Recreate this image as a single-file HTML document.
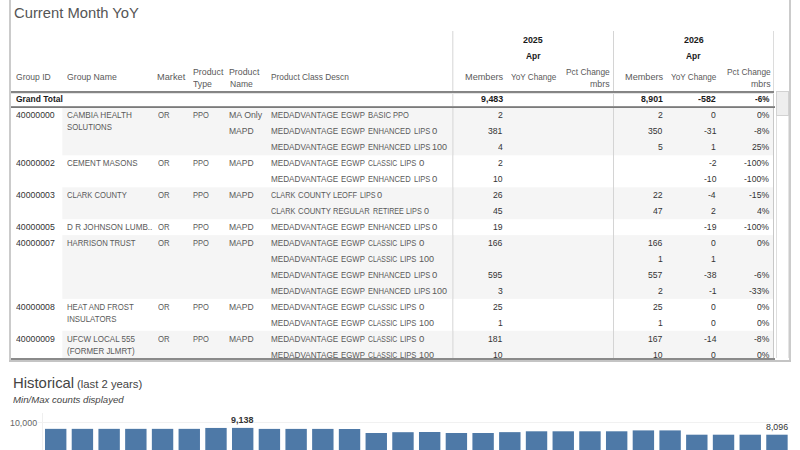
<!DOCTYPE html>
<html><head><meta charset="utf-8"><title>Current Month YoY</title>
<style>
html,body{margin:0;padding:0;}
body{width:800px;height:450px;overflow:hidden;background:#fff;position:relative;font-family:"Liberation Sans",sans-serif;color:#333;}
.t{position:absolute;display:block;white-space:nowrap;transform-origin:0 0;}
.box{position:absolute;}
#clip{position:absolute;left:0;top:0;width:800px;height:358px;overflow:hidden;}
</style></head><body>

<svg class="box" style="left:0;top:100px" width="800" height="260" viewBox="0 100 800 260">
<rect x="62.3" y="107" width="711.2" height="48.30" fill="#f5f5f5"/>
<rect x="62.3" y="187.3" width="711.2" height="31.90" fill="#f5f5f5"/>
<rect x="62.3" y="235.1" width="711.2" height="63.80" fill="#f5f5f5"/>
<rect x="62.3" y="330.8" width="711.2" height="27.20" fill="#f5f5f5"/>
</svg>
<div class="box" style="left:9px;top:0;width:2px;height:362px;background:#cbcbcb"></div>
<div class="box" style="left:789px;top:0;width:2px;height:362px;background:#cbcbcb"></div>
<div class="box" style="left:9px;top:360px;width:782px;height:2px;background:#c4c4c4"></div>
<div class="box" style="left:452px;top:31px;width:1px;height:327px;background:#e2e2e2"></div>
<div class="box" style="left:453px;top:31px;width:1px;height:327px;background:rgba(0,0,0,0.05)"></div>
<div class="box" style="left:613px;top:31px;width:1px;height:327px;background:#d4d4d4"></div>
<div class="box" style="left:773px;top:31px;width:1px;height:60px;background:#dcdcdc"></div>
<div class="box" style="left:773px;top:91px;width:1px;height:267px;background:#c8c8c8"></div>
<div class="box" style="left:11px;top:91px;width:763px;height:1px;background:#848484"></div>
<div class="box" style="left:11px;top:92px;width:763px;height:1px;background:#868686"></div>
<div class="box" style="left:11px;top:93px;width:763px;height:1px;background:#e4e4e4"></div>
<div class="box" style="left:11px;top:106px;width:764px;height:1px;background:#929292"></div>
<div class="box" style="left:11px;top:107px;width:764px;height:1px;background:#7a7a7a"></div>
<div class="box" style="left:11px;top:358px;width:764px;height:2px;background:#8a8a8a"></div>
<div class="box" style="left:776px;top:91px;width:1px;height:267px;background:#dedede"></div>
<div class="box" style="left:788px;top:91px;width:1px;height:267px;background:#e4e4e4"></div>
<div class="box" style="left:776px;top:91px;width:13px;height:25px;background:#eeeeee;box-sizing:border-box;border:1px solid #d2d2d2"></div>
<div class="box" style="left:42px;top:413px;width:1px;height:37px;background:#efefef"></div>
<div class="box" style="left:38px;top:422px;width:752px;height:1px;background:#f1f1f1"></div>
<div id="clip">
<div class="t" style="left:14.21px;top:4.00px;font-size:14.0px;line-height:18px;color:#555;transform:scaleX(1.0557)">Current Month YoY</div>
<div class="t" style="left:523.32px;top:34.00px;font-size:8.8px;line-height:12px;color:#1a1a1a;font-weight:bold;transform:scaleX(1.0062)">2025</div>
<div class="t" style="left:525.97px;top:50.00px;font-size:8.8px;line-height:12px;color:#1a1a1a;font-weight:bold;transform:scaleX(0.9535)">Apr</div>
<div class="t" style="left:683.62px;top:34.00px;font-size:8.8px;line-height:12px;color:#1a1a1a;font-weight:bold;transform:scaleX(1.0062)">2026</div>
<div class="t" style="left:686.27px;top:50.00px;font-size:8.8px;line-height:12px;color:#1a1a1a;font-weight:bold;transform:scaleX(0.9535)">Apr</div>
<div class="t" style="left:16.00px;top:71.00px;font-size:8.8px;line-height:12px;color:#5a5a5a;transform:scaleX(0.9718)">Group ID</div>
<div class="t" style="left:67.09px;top:71.00px;font-size:8.8px;line-height:12px;color:#5a5a5a;transform:scaleX(0.9878)">Group Name</div>
<div class="t" style="left:157.18px;top:71.00px;font-size:8.8px;line-height:12px;color:#5a5a5a;transform:scaleX(1.0520)">Market</div>
<div>
<span class="t" style="left:193.31px;top:66.00px;font-size:8.8px;line-height:12px;color:#5a5a5a;transform:scaleX(1.0010)">Product</span>
<span class="t" style="left:193.36px;top:78.00px;font-size:8.8px;line-height:12px;color:#5a5a5a;transform:scaleX(0.9955)">Type</span>
</div>
<div>
<span class="t" style="left:229.31px;top:66.00px;font-size:8.8px;line-height:12px;color:#5a5a5a;transform:scaleX(1.0010)">Product</span>
<span class="t" style="left:229.53px;top:78.00px;font-size:8.8px;line-height:12px;color:#5a5a5a;transform:scaleX(0.9719)">Name</span>
</div>
<div class="t" style="left:271.45px;top:71.00px;font-size:8.8px;line-height:12px;color:#5a5a5a;transform:scaleX(0.9471)">Product Class Descn</div>
<div class="t" style="left:464.98px;top:71.00px;font-size:8.8px;line-height:12px;color:#5a5a5a;transform:scaleX(1.0417)">Members</div>
<div class="t" style="left:511.17px;top:71.00px;font-size:8.8px;line-height:12px;color:#5a5a5a;transform:scaleX(0.9259)">YoY Change</div>
<div>
<span class="t" style="left:566.25px;top:66.00px;font-size:8.8px;line-height:12px;color:#5a5a5a;transform:scaleX(0.9524)">Pct Change</span>
<span class="t" style="left:590.35px;top:78.00px;font-size:8.8px;line-height:12px;color:#5a5a5a;transform:scaleX(1.0037)">mbrs</span>
</div>
<div class="t" style="left:625.28px;top:71.00px;font-size:8.8px;line-height:12px;color:#5a5a5a;transform:scaleX(1.0417)">Members</div>
<div class="t" style="left:671.47px;top:71.00px;font-size:8.8px;line-height:12px;color:#5a5a5a;transform:scaleX(0.9259)">YoY Change</div>
<div>
<span class="t" style="left:726.55px;top:66.00px;font-size:8.8px;line-height:12px;color:#5a5a5a;transform:scaleX(0.9524)">Pct Change</span>
<span class="t" style="left:750.65px;top:78.00px;font-size:8.8px;line-height:12px;color:#5a5a5a;transform:scaleX(1.0037)">mbrs</span>
</div>
<div class="t" style="left:16.14px;top:93.00px;font-size:8.8px;line-height:12px;color:#1a1a1a;font-weight:bold;transform:scaleX(0.9597)">Grand Total</div>
<div class="t" style="left:480.52px;top:93.00px;font-size:8.8px;line-height:12px;color:#1a1a1a;font-weight:bold;transform:scaleX(1.0080)">9,483</div>
<div class="t" style="left:640.63px;top:93.00px;font-size:8.8px;line-height:12px;color:#1a1a1a;font-weight:bold;transform:scaleX(0.9941)">8,901</div>
<div class="t" style="left:698.32px;top:93.00px;font-size:8.8px;line-height:12px;color:#1a1a1a;font-weight:bold;transform:scaleX(1.0106)">-582</div>
<div class="t" style="left:754.75px;top:93.00px;font-size:8.8px;line-height:12px;color:#1a1a1a;font-weight:bold;transform:scaleX(0.9181)">-6%</div>
<div class="t" style="left:16.06px;top:109.00px;font-size:8.8px;line-height:12px;color:#333;transform:scaleX(0.9872)">40000000</div>
<div>
<span class="t" style="left:67.22px;top:109.00px;font-size:8.8px;line-height:12px;color:#5a5a5a;transform:scaleX(0.9317)">CAMBIA HEALTH</span>
<span class="t" style="left:67.36px;top:121.00px;font-size:8.8px;line-height:12px;color:#5a5a5a;transform:scaleX(0.8823)">SOLUTIONS</span>
</div>
<div class="t" style="left:157.64px;top:109.00px;font-size:8.8px;line-height:12px;color:#5a5a5a;transform:scaleX(0.8812)">OR</div>
<div class="t" style="left:193.41px;top:109.00px;font-size:8.8px;line-height:12px;color:#5a5a5a;transform:scaleX(0.8565)">PPO</div>
<div class="t" style="left:229.31px;top:109.00px;font-size:8.8px;line-height:12px;color:#5a5a5a;transform:scaleX(0.9984)">MA Only</div>
<div>
<span class="t" style="left:271.36px;top:109.00px;font-size:8.8px;line-height:12px;color:#5a5a5a;transform:scaleX(0.9270)">MEDADVANTAGE</span>
<span class="t" style="left:341.39px;top:109.00px;font-size:8.8px;line-height:12px;color:#5a5a5a;transform:scaleX(0.8865)">EGWP</span>
<span class="t" style="left:368.40px;top:109.00px;font-size:8.8px;line-height:12px;color:#5a5a5a;transform:scaleX(0.8754)">BASIC</span>
<span class="t" style="left:393.41px;top:109.00px;font-size:8.8px;line-height:12px;color:#5a5a5a;transform:scaleX(0.8565)">PPO</span>
</div>
<div class="t" style="left:498.06px;top:109.00px;font-size:8.8px;line-height:12px;color:#333;transform:scaleX(0.9780)">2</div>
<div class="t" style="left:657.86px;top:109.00px;font-size:8.8px;line-height:12px;color:#333;transform:scaleX(0.9780)">2</div>
<div class="t" style="left:711.33px;top:109.00px;font-size:8.8px;line-height:12px;color:#333;transform:scaleX(0.9780)">0</div>
<div class="t" style="left:756.82px;top:109.00px;font-size:8.8px;line-height:12px;color:#333;transform:scaleX(0.9780)">0%</div>
<div class="t" style="left:229.33px;top:125.00px;font-size:8.8px;line-height:12px;color:#5a5a5a;transform:scaleX(0.9700)">MAPD</div>
<div>
<span class="t" style="left:271.36px;top:125.00px;font-size:8.8px;line-height:12px;color:#5a5a5a;transform:scaleX(0.9270)">MEDADVANTAGE</span>
<span class="t" style="left:341.39px;top:125.00px;font-size:8.8px;line-height:12px;color:#5a5a5a;transform:scaleX(0.8865)">EGWP</span>
<span class="t" style="left:368.41px;top:125.00px;font-size:8.8px;line-height:12px;color:#5a5a5a;transform:scaleX(0.8638)">ENHANCED</span>
<span class="t" style="left:413.61px;top:125.00px;font-size:8.8px;line-height:12px;color:#5a5a5a;transform:scaleX(0.8546)">LIPS</span>
<span class="t" style="left:432.20px;top:125.00px;font-size:8.8px;line-height:12px;color:#5a5a5a;transform:scaleX(1.0795)">0</span>
</div>
<div class="t" style="left:488.49px;top:125.00px;font-size:8.8px;line-height:12px;color:#333;transform:scaleX(0.9780)">381</div>
<div class="t" style="left:648.15px;top:125.00px;font-size:8.8px;line-height:12px;color:#333;transform:scaleX(0.9780)">350</div>
<div class="t" style="left:703.81px;top:125.00px;font-size:8.8px;line-height:12px;color:#333;transform:scaleX(0.9780)">-31</div>
<div class="t" style="left:753.95px;top:125.00px;font-size:8.8px;line-height:12px;color:#333;transform:scaleX(0.9780)">-8%</div>
<div>
<span class="t" style="left:271.36px;top:141.00px;font-size:8.8px;line-height:12px;color:#5a5a5a;transform:scaleX(0.9270)">MEDADVANTAGE</span>
<span class="t" style="left:341.39px;top:141.00px;font-size:8.8px;line-height:12px;color:#5a5a5a;transform:scaleX(0.8865)">EGWP</span>
<span class="t" style="left:368.41px;top:141.00px;font-size:8.8px;line-height:12px;color:#5a5a5a;transform:scaleX(0.8638)">ENHANCED</span>
<span class="t" style="left:413.61px;top:141.00px;font-size:8.8px;line-height:12px;color:#5a5a5a;transform:scaleX(0.8546)">LIPS</span>
<span class="t" style="left:432.13px;top:141.00px;font-size:8.8px;line-height:12px;color:#5a5a5a;transform:scaleX(1.0278)">100</span>
</div>
<div class="t" style="left:497.93px;top:141.00px;font-size:8.8px;line-height:12px;color:#333;transform:scaleX(0.9780)">4</div>
<div class="t" style="left:657.86px;top:141.00px;font-size:8.8px;line-height:12px;color:#333;transform:scaleX(0.9780)">5</div>
<div class="t" style="left:711.46px;top:141.00px;font-size:8.8px;line-height:12px;color:#333;transform:scaleX(0.9780)">1</div>
<div class="t" style="left:752.03px;top:141.00px;font-size:8.8px;line-height:12px;color:#333;transform:scaleX(0.9780)">25%</div>
<div class="t" style="left:16.06px;top:157.00px;font-size:8.8px;line-height:12px;color:#333;transform:scaleX(0.9907)">40000002</div>
<div>
<span class="t" style="left:67.22px;top:157.00px;font-size:8.8px;line-height:12px;color:#5a5a5a;transform:scaleX(0.9096)">CEMENT MASONS</span>
</div>
<div class="t" style="left:157.64px;top:157.00px;font-size:8.8px;line-height:12px;color:#5a5a5a;transform:scaleX(0.8812)">OR</div>
<div class="t" style="left:193.41px;top:157.00px;font-size:8.8px;line-height:12px;color:#5a5a5a;transform:scaleX(0.8565)">PPO</div>
<div class="t" style="left:229.33px;top:157.00px;font-size:8.8px;line-height:12px;color:#5a5a5a;transform:scaleX(0.9700)">MAPD</div>
<div>
<span class="t" style="left:271.36px;top:157.00px;font-size:8.8px;line-height:12px;color:#5a5a5a;transform:scaleX(0.9270)">MEDADVANTAGE</span>
<span class="t" style="left:341.39px;top:157.00px;font-size:8.8px;line-height:12px;color:#5a5a5a;transform:scaleX(0.8865)">EGWP</span>
<span class="t" style="left:368.18px;top:157.00px;font-size:8.8px;line-height:12px;color:#5a5a5a;transform:scaleX(0.7783)">CLASSIC</span>
<span class="t" style="left:400.21px;top:157.00px;font-size:8.8px;line-height:12px;color:#5a5a5a;transform:scaleX(0.8601)">LIPS</span>
<span class="t" style="left:418.80px;top:157.00px;font-size:8.8px;line-height:12px;color:#5a5a5a;transform:scaleX(1.0909)">0</span>
</div>
<div class="t" style="left:498.06px;top:157.00px;font-size:8.8px;line-height:12px;color:#333;transform:scaleX(0.9780)">2</div>
<div class="t" style="left:708.60px;top:157.00px;font-size:8.8px;line-height:12px;color:#333;transform:scaleX(0.9780)">-2</div>
<div class="t" style="left:744.38px;top:157.00px;font-size:8.8px;line-height:12px;color:#333;transform:scaleX(0.9780)">-100%</div>
<div>
<span class="t" style="left:271.36px;top:173.00px;font-size:8.8px;line-height:12px;color:#5a5a5a;transform:scaleX(0.9270)">MEDADVANTAGE</span>
<span class="t" style="left:341.39px;top:173.00px;font-size:8.8px;line-height:12px;color:#5a5a5a;transform:scaleX(0.8865)">EGWP</span>
<span class="t" style="left:368.41px;top:173.00px;font-size:8.8px;line-height:12px;color:#5a5a5a;transform:scaleX(0.8638)">ENHANCED</span>
<span class="t" style="left:413.61px;top:173.00px;font-size:8.8px;line-height:12px;color:#5a5a5a;transform:scaleX(0.8546)">LIPS</span>
<span class="t" style="left:432.20px;top:173.00px;font-size:8.8px;line-height:12px;color:#5a5a5a;transform:scaleX(1.0795)">0</span>
</div>
<div class="t" style="left:493.14px;top:173.00px;font-size:8.8px;line-height:12px;color:#333;transform:scaleX(0.9780)">10</div>
<div class="t" style="left:703.68px;top:173.00px;font-size:8.8px;line-height:12px;color:#333;transform:scaleX(0.9780)">-10</div>
<div class="t" style="left:744.38px;top:173.00px;font-size:8.8px;line-height:12px;color:#333;transform:scaleX(0.9780)">-100%</div>
<div class="t" style="left:16.06px;top:189.00px;font-size:8.8px;line-height:12px;color:#333;transform:scaleX(0.9907)">40000003</div>
<div>
<span class="t" style="left:67.24px;top:189.00px;font-size:8.8px;line-height:12px;color:#5a5a5a;transform:scaleX(0.8680)">CLARK COUNTY</span>
</div>
<div class="t" style="left:157.64px;top:189.00px;font-size:8.8px;line-height:12px;color:#5a5a5a;transform:scaleX(0.8812)">OR</div>
<div class="t" style="left:193.41px;top:189.00px;font-size:8.8px;line-height:12px;color:#5a5a5a;transform:scaleX(0.8565)">PPO</div>
<div class="t" style="left:229.33px;top:189.00px;font-size:8.8px;line-height:12px;color:#5a5a5a;transform:scaleX(0.9700)">MAPD</div>
<div>
<span class="t" style="left:271.41px;top:189.00px;font-size:8.8px;line-height:12px;color:#5a5a5a;transform:scaleX(0.8323)">CLARK</span>
<span class="t" style="left:298.23px;top:189.00px;font-size:8.8px;line-height:12px;color:#5a5a5a;transform:scaleX(0.8868)">COUNTY</span>
<span class="t" style="left:333.42px;top:189.00px;font-size:8.8px;line-height:12px;color:#5a5a5a;transform:scaleX(0.8472)">LEOFF</span>
<span class="t" style="left:359.54px;top:189.00px;font-size:8.8px;line-height:12px;color:#5a5a5a;transform:scaleX(0.8157)">LIPS</span>
<span class="t" style="left:377.46px;top:189.00px;font-size:8.8px;line-height:12px;color:#5a5a5a;transform:scaleX(1.0455)">0</span>
</div>
<div class="t" style="left:493.28px;top:189.00px;font-size:8.8px;line-height:12px;color:#333;transform:scaleX(0.9780)">26</div>
<div class="t" style="left:653.08px;top:189.00px;font-size:8.8px;line-height:12px;color:#333;transform:scaleX(0.9780)">22</div>
<div class="t" style="left:708.46px;top:189.00px;font-size:8.8px;line-height:12px;color:#333;transform:scaleX(0.9780)">-4</div>
<div class="t" style="left:749.16px;top:189.00px;font-size:8.8px;line-height:12px;color:#333;transform:scaleX(0.9780)">-15%</div>
<div>
<span class="t" style="left:271.41px;top:205.00px;font-size:8.8px;line-height:12px;color:#5a5a5a;transform:scaleX(0.8323)">CLARK</span>
<span class="t" style="left:298.23px;top:205.00px;font-size:8.8px;line-height:12px;color:#5a5a5a;transform:scaleX(0.8868)">COUNTY</span>
<span class="t" style="left:333.41px;top:205.00px;font-size:8.8px;line-height:12px;color:#5a5a5a;transform:scaleX(0.8616)">REGULAR</span>
<span class="t" style="left:372.94px;top:205.00px;font-size:8.8px;line-height:12px;color:#5a5a5a;transform:scaleX(0.8090)">RETIREE</span>
<span class="t" style="left:406.03px;top:205.00px;font-size:8.8px;line-height:12px;color:#5a5a5a;transform:scaleX(0.8268)">LIPS</span>
<span class="t" style="left:424.32px;top:205.00px;font-size:8.8px;line-height:12px;color:#5a5a5a;transform:scaleX(1.0227)">0</span>
</div>
<div class="t" style="left:493.28px;top:205.00px;font-size:8.8px;line-height:12px;color:#333;transform:scaleX(0.9780)">45</div>
<div class="t" style="left:653.08px;top:205.00px;font-size:8.8px;line-height:12px;color:#333;transform:scaleX(0.9780)">47</div>
<div class="t" style="left:711.46px;top:205.00px;font-size:8.8px;line-height:12px;color:#333;transform:scaleX(0.9780)">2</div>
<div class="t" style="left:756.82px;top:205.00px;font-size:8.8px;line-height:12px;color:#333;transform:scaleX(0.9780)">4%</div>
<div class="t" style="left:16.06px;top:221.00px;font-size:8.8px;line-height:12px;color:#333;transform:scaleX(0.9907)">40000005</div>
<div>
<span class="t" style="left:66.96px;top:221.00px;font-size:8.8px;line-height:12px;color:#5a5a5a;transform:scaleX(0.9238)">D R JOHNSON LUMB..</span>
</div>
<div class="t" style="left:157.64px;top:221.00px;font-size:8.8px;line-height:12px;color:#5a5a5a;transform:scaleX(0.8812)">OR</div>
<div class="t" style="left:193.41px;top:221.00px;font-size:8.8px;line-height:12px;color:#5a5a5a;transform:scaleX(0.8565)">PPO</div>
<div class="t" style="left:229.33px;top:221.00px;font-size:8.8px;line-height:12px;color:#5a5a5a;transform:scaleX(0.9700)">MAPD</div>
<div>
<span class="t" style="left:271.36px;top:221.00px;font-size:8.8px;line-height:12px;color:#5a5a5a;transform:scaleX(0.9270)">MEDADVANTAGE</span>
<span class="t" style="left:341.39px;top:221.00px;font-size:8.8px;line-height:12px;color:#5a5a5a;transform:scaleX(0.8865)">EGWP</span>
<span class="t" style="left:368.41px;top:221.00px;font-size:8.8px;line-height:12px;color:#5a5a5a;transform:scaleX(0.8638)">ENHANCED</span>
<span class="t" style="left:413.61px;top:221.00px;font-size:8.8px;line-height:12px;color:#5a5a5a;transform:scaleX(0.8546)">LIPS</span>
<span class="t" style="left:432.20px;top:221.00px;font-size:8.8px;line-height:12px;color:#5a5a5a;transform:scaleX(1.0795)">0</span>
</div>
<div class="t" style="left:493.28px;top:221.00px;font-size:8.8px;line-height:12px;color:#333;transform:scaleX(0.9780)">19</div>
<div class="t" style="left:703.81px;top:221.00px;font-size:8.8px;line-height:12px;color:#333;transform:scaleX(0.9780)">-19</div>
<div class="t" style="left:744.38px;top:221.00px;font-size:8.8px;line-height:12px;color:#333;transform:scaleX(0.9780)">-100%</div>
<div class="t" style="left:16.06px;top:237.00px;font-size:8.8px;line-height:12px;color:#333;transform:scaleX(0.9907)">40000007</div>
<div>
<span class="t" style="left:67.00px;top:237.00px;font-size:8.8px;line-height:12px;color:#5a5a5a;transform:scaleX(0.8787)">HARRISON TRUST</span>
</div>
<div class="t" style="left:157.64px;top:237.00px;font-size:8.8px;line-height:12px;color:#5a5a5a;transform:scaleX(0.8812)">OR</div>
<div class="t" style="left:193.41px;top:237.00px;font-size:8.8px;line-height:12px;color:#5a5a5a;transform:scaleX(0.8565)">PPO</div>
<div class="t" style="left:229.33px;top:237.00px;font-size:8.8px;line-height:12px;color:#5a5a5a;transform:scaleX(0.9700)">MAPD</div>
<div>
<span class="t" style="left:271.36px;top:237.00px;font-size:8.8px;line-height:12px;color:#5a5a5a;transform:scaleX(0.9270)">MEDADVANTAGE</span>
<span class="t" style="left:341.39px;top:237.00px;font-size:8.8px;line-height:12px;color:#5a5a5a;transform:scaleX(0.8865)">EGWP</span>
<span class="t" style="left:368.18px;top:237.00px;font-size:8.8px;line-height:12px;color:#5a5a5a;transform:scaleX(0.7783)">CLASSIC</span>
<span class="t" style="left:400.21px;top:237.00px;font-size:8.8px;line-height:12px;color:#5a5a5a;transform:scaleX(0.8601)">LIPS</span>
<span class="t" style="left:418.80px;top:237.00px;font-size:8.8px;line-height:12px;color:#5a5a5a;transform:scaleX(1.0909)">0</span>
</div>
<div class="t" style="left:488.49px;top:237.00px;font-size:8.8px;line-height:12px;color:#333;transform:scaleX(0.9780)">166</div>
<div class="t" style="left:648.29px;top:237.00px;font-size:8.8px;line-height:12px;color:#333;transform:scaleX(0.9780)">166</div>
<div class="t" style="left:711.33px;top:237.00px;font-size:8.8px;line-height:12px;color:#333;transform:scaleX(0.9780)">0</div>
<div class="t" style="left:756.82px;top:237.00px;font-size:8.8px;line-height:12px;color:#333;transform:scaleX(0.9780)">0%</div>
<div>
<span class="t" style="left:271.36px;top:253.00px;font-size:8.8px;line-height:12px;color:#5a5a5a;transform:scaleX(0.9270)">MEDADVANTAGE</span>
<span class="t" style="left:341.39px;top:253.00px;font-size:8.8px;line-height:12px;color:#5a5a5a;transform:scaleX(0.8865)">EGWP</span>
<span class="t" style="left:368.18px;top:253.00px;font-size:8.8px;line-height:12px;color:#5a5a5a;transform:scaleX(0.7783)">CLASSIC</span>
<span class="t" style="left:400.21px;top:253.00px;font-size:8.8px;line-height:12px;color:#5a5a5a;transform:scaleX(0.8601)">LIPS</span>
<span class="t" style="left:418.83px;top:253.00px;font-size:8.8px;line-height:12px;color:#5a5a5a;transform:scaleX(1.0314)">100</span>
</div>
<div class="t" style="left:657.86px;top:253.00px;font-size:8.8px;line-height:12px;color:#333;transform:scaleX(0.9780)">1</div>
<div class="t" style="left:711.46px;top:253.00px;font-size:8.8px;line-height:12px;color:#333;transform:scaleX(0.9780)">1</div>
<div>
<span class="t" style="left:271.36px;top:269.00px;font-size:8.8px;line-height:12px;color:#5a5a5a;transform:scaleX(0.9270)">MEDADVANTAGE</span>
<span class="t" style="left:341.39px;top:269.00px;font-size:8.8px;line-height:12px;color:#5a5a5a;transform:scaleX(0.8865)">EGWP</span>
<span class="t" style="left:368.41px;top:269.00px;font-size:8.8px;line-height:12px;color:#5a5a5a;transform:scaleX(0.8638)">ENHANCED</span>
<span class="t" style="left:413.61px;top:269.00px;font-size:8.8px;line-height:12px;color:#5a5a5a;transform:scaleX(0.8546)">LIPS</span>
<span class="t" style="left:432.20px;top:269.00px;font-size:8.8px;line-height:12px;color:#5a5a5a;transform:scaleX(1.0795)">0</span>
</div>
<div class="t" style="left:488.49px;top:269.00px;font-size:8.8px;line-height:12px;color:#333;transform:scaleX(0.9780)">595</div>
<div class="t" style="left:648.29px;top:269.00px;font-size:8.8px;line-height:12px;color:#333;transform:scaleX(0.9780)">557</div>
<div class="t" style="left:703.81px;top:269.00px;font-size:8.8px;line-height:12px;color:#333;transform:scaleX(0.9780)">-38</div>
<div class="t" style="left:753.95px;top:269.00px;font-size:8.8px;line-height:12px;color:#333;transform:scaleX(0.9780)">-6%</div>
<div>
<span class="t" style="left:271.36px;top:285.00px;font-size:8.8px;line-height:12px;color:#5a5a5a;transform:scaleX(0.9270)">MEDADVANTAGE</span>
<span class="t" style="left:341.39px;top:285.00px;font-size:8.8px;line-height:12px;color:#5a5a5a;transform:scaleX(0.8865)">EGWP</span>
<span class="t" style="left:368.41px;top:285.00px;font-size:8.8px;line-height:12px;color:#5a5a5a;transform:scaleX(0.8638)">ENHANCED</span>
<span class="t" style="left:413.61px;top:285.00px;font-size:8.8px;line-height:12px;color:#5a5a5a;transform:scaleX(0.8546)">LIPS</span>
<span class="t" style="left:432.13px;top:285.00px;font-size:8.8px;line-height:12px;color:#5a5a5a;transform:scaleX(1.0278)">100</span>
</div>
<div class="t" style="left:498.06px;top:285.00px;font-size:8.8px;line-height:12px;color:#333;transform:scaleX(0.9780)">3</div>
<div class="t" style="left:657.86px;top:285.00px;font-size:8.8px;line-height:12px;color:#333;transform:scaleX(0.9780)">2</div>
<div class="t" style="left:708.60px;top:285.00px;font-size:8.8px;line-height:12px;color:#333;transform:scaleX(0.9780)">-1</div>
<div class="t" style="left:749.16px;top:285.00px;font-size:8.8px;line-height:12px;color:#333;transform:scaleX(0.9780)">-33%</div>
<div class="t" style="left:16.06px;top:301.00px;font-size:8.8px;line-height:12px;color:#333;transform:scaleX(0.9907)">40000008</div>
<div>
<span class="t" style="left:66.99px;top:301.00px;font-size:8.8px;line-height:12px;color:#5a5a5a;transform:scaleX(0.8835)">HEAT AND FROST</span>
<span class="t" style="left:66.99px;top:313.00px;font-size:8.8px;line-height:12px;color:#5a5a5a;transform:scaleX(0.8921)">INSULATORS</span>
</div>
<div class="t" style="left:157.64px;top:301.00px;font-size:8.8px;line-height:12px;color:#5a5a5a;transform:scaleX(0.8812)">OR</div>
<div class="t" style="left:193.41px;top:301.00px;font-size:8.8px;line-height:12px;color:#5a5a5a;transform:scaleX(0.8565)">PPO</div>
<div class="t" style="left:229.33px;top:301.00px;font-size:8.8px;line-height:12px;color:#5a5a5a;transform:scaleX(0.9700)">MAPD</div>
<div>
<span class="t" style="left:271.36px;top:301.00px;font-size:8.8px;line-height:12px;color:#5a5a5a;transform:scaleX(0.9270)">MEDADVANTAGE</span>
<span class="t" style="left:341.39px;top:301.00px;font-size:8.8px;line-height:12px;color:#5a5a5a;transform:scaleX(0.8865)">EGWP</span>
<span class="t" style="left:368.18px;top:301.00px;font-size:8.8px;line-height:12px;color:#5a5a5a;transform:scaleX(0.7783)">CLASSIC</span>
<span class="t" style="left:400.21px;top:301.00px;font-size:8.8px;line-height:12px;color:#5a5a5a;transform:scaleX(0.8601)">LIPS</span>
<span class="t" style="left:418.80px;top:301.00px;font-size:8.8px;line-height:12px;color:#5a5a5a;transform:scaleX(1.0909)">0</span>
</div>
<div class="t" style="left:493.28px;top:301.00px;font-size:8.8px;line-height:12px;color:#333;transform:scaleX(0.9780)">25</div>
<div class="t" style="left:653.08px;top:301.00px;font-size:8.8px;line-height:12px;color:#333;transform:scaleX(0.9780)">25</div>
<div class="t" style="left:711.33px;top:301.00px;font-size:8.8px;line-height:12px;color:#333;transform:scaleX(0.9780)">0</div>
<div class="t" style="left:756.82px;top:301.00px;font-size:8.8px;line-height:12px;color:#333;transform:scaleX(0.9780)">0%</div>
<div>
<span class="t" style="left:271.36px;top:317.00px;font-size:8.8px;line-height:12px;color:#5a5a5a;transform:scaleX(0.9270)">MEDADVANTAGE</span>
<span class="t" style="left:341.39px;top:317.00px;font-size:8.8px;line-height:12px;color:#5a5a5a;transform:scaleX(0.8865)">EGWP</span>
<span class="t" style="left:368.18px;top:317.00px;font-size:8.8px;line-height:12px;color:#5a5a5a;transform:scaleX(0.7783)">CLASSIC</span>
<span class="t" style="left:400.21px;top:317.00px;font-size:8.8px;line-height:12px;color:#5a5a5a;transform:scaleX(0.8601)">LIPS</span>
<span class="t" style="left:418.83px;top:317.00px;font-size:8.8px;line-height:12px;color:#5a5a5a;transform:scaleX(1.0314)">100</span>
</div>
<div class="t" style="left:498.06px;top:317.00px;font-size:8.8px;line-height:12px;color:#333;transform:scaleX(0.9780)">1</div>
<div class="t" style="left:657.86px;top:317.00px;font-size:8.8px;line-height:12px;color:#333;transform:scaleX(0.9780)">1</div>
<div class="t" style="left:711.33px;top:317.00px;font-size:8.8px;line-height:12px;color:#333;transform:scaleX(0.9780)">0</div>
<div class="t" style="left:756.82px;top:317.00px;font-size:8.8px;line-height:12px;color:#333;transform:scaleX(0.9780)">0%</div>
<div class="t" style="left:16.06px;top:333.00px;font-size:8.8px;line-height:12px;color:#333;transform:scaleX(0.9907)">40000009</div>
<div>
<span class="t" style="left:67.10px;top:333.00px;font-size:8.8px;line-height:12px;color:#5a5a5a;transform:scaleX(0.9119)">UFCW LOCAL 555</span>
<span class="t" style="left:67.23px;top:345.00px;font-size:8.8px;line-height:12px;color:#5a5a5a;transform:scaleX(0.9056)">(FORMER JLMRT)</span>
</div>
<div class="t" style="left:157.64px;top:333.00px;font-size:8.8px;line-height:12px;color:#5a5a5a;transform:scaleX(0.8812)">OR</div>
<div class="t" style="left:193.41px;top:333.00px;font-size:8.8px;line-height:12px;color:#5a5a5a;transform:scaleX(0.8565)">PPO</div>
<div class="t" style="left:229.33px;top:333.00px;font-size:8.8px;line-height:12px;color:#5a5a5a;transform:scaleX(0.9700)">MAPD</div>
<div>
<span class="t" style="left:271.36px;top:333.00px;font-size:8.8px;line-height:12px;color:#5a5a5a;transform:scaleX(0.9270)">MEDADVANTAGE</span>
<span class="t" style="left:341.39px;top:333.00px;font-size:8.8px;line-height:12px;color:#5a5a5a;transform:scaleX(0.8865)">EGWP</span>
<span class="t" style="left:368.18px;top:333.00px;font-size:8.8px;line-height:12px;color:#5a5a5a;transform:scaleX(0.7783)">CLASSIC</span>
<span class="t" style="left:400.21px;top:333.00px;font-size:8.8px;line-height:12px;color:#5a5a5a;transform:scaleX(0.8601)">LIPS</span>
<span class="t" style="left:418.80px;top:333.00px;font-size:8.8px;line-height:12px;color:#5a5a5a;transform:scaleX(1.0909)">0</span>
</div>
<div class="t" style="left:488.49px;top:333.00px;font-size:8.8px;line-height:12px;color:#333;transform:scaleX(0.9780)">181</div>
<div class="t" style="left:648.29px;top:333.00px;font-size:8.8px;line-height:12px;color:#333;transform:scaleX(0.9780)">167</div>
<div class="t" style="left:703.68px;top:333.00px;font-size:8.8px;line-height:12px;color:#333;transform:scaleX(0.9780)">-14</div>
<div class="t" style="left:753.95px;top:333.00px;font-size:8.8px;line-height:12px;color:#333;transform:scaleX(0.9780)">-8%</div>
<div>
<span class="t" style="left:271.36px;top:349.00px;font-size:8.8px;line-height:12px;color:#5a5a5a;transform:scaleX(0.9270)">MEDADVANTAGE</span>
<span class="t" style="left:341.39px;top:349.00px;font-size:8.8px;line-height:12px;color:#5a5a5a;transform:scaleX(0.8865)">EGWP</span>
<span class="t" style="left:368.18px;top:349.00px;font-size:8.8px;line-height:12px;color:#5a5a5a;transform:scaleX(0.7783)">CLASSIC</span>
<span class="t" style="left:400.21px;top:349.00px;font-size:8.8px;line-height:12px;color:#5a5a5a;transform:scaleX(0.8601)">LIPS</span>
<span class="t" style="left:418.83px;top:349.00px;font-size:8.8px;line-height:12px;color:#5a5a5a;transform:scaleX(1.0314)">100</span>
</div>
<div class="t" style="left:493.14px;top:349.00px;font-size:8.8px;line-height:12px;color:#333;transform:scaleX(0.9780)">10</div>
<div class="t" style="left:652.94px;top:349.00px;font-size:8.8px;line-height:12px;color:#333;transform:scaleX(0.9780)">10</div>
<div class="t" style="left:711.33px;top:349.00px;font-size:8.8px;line-height:12px;color:#333;transform:scaleX(0.9780)">0</div>
<div class="t" style="left:756.82px;top:349.00px;font-size:8.8px;line-height:12px;color:#333;transform:scaleX(0.9780)">0%</div>
</div>
<div>
<span class="t" style="left:12.59px;top:373.00px;font-size:15.0px;line-height:19px;color:#444;transform:scaleX(0.9913)">Historical</span>
<span class="t" style="left:77.47px;top:377.00px;font-size:10.6px;line-height:14px;color:#444;transform:scaleX(1.0662)">(last 2 years)</span>
</div>
<div class="t" style="left:12.65px;top:393.00px;font-size:9.4px;line-height:13px;color:#444;font-style:italic;transform:scaleX(1.0262)">Min/Max counts displayed</div>
<div class="t" style="left:10.15px;top:417.00px;font-size:8.8px;line-height:12px;color:#666;transform:scaleX(1.0059)">10,000</div>
<div class="t" style="left:230.97px;top:414.00px;font-size:8.8px;line-height:12px;color:#333;font-weight:bold;transform:scaleX(1.0173)">9,138</div>
<div class="t" style="left:765.52px;top:421.00px;font-size:8.8px;line-height:12px;color:#333;transform:scaleX(1.0028)">8,096</div>
<svg class="box" style="left:0;top:410px" width="800" height="40" viewBox="0 410 800 40">
<rect x="45.00" y="428.85" width="21.4" height="23.15" fill="#4e79a7"/>
<rect x="71.71" y="428.85" width="21.4" height="23.15" fill="#4e79a7"/>
<rect x="98.43" y="428.85" width="21.4" height="23.15" fill="#4e79a7"/>
<rect x="125.14" y="428.85" width="21.4" height="23.15" fill="#4e79a7"/>
<rect x="151.85" y="428.85" width="21.4" height="23.15" fill="#4e79a7"/>
<rect x="178.56" y="428.85" width="21.4" height="23.15" fill="#4e79a7"/>
<rect x="205.28" y="427.95" width="21.4" height="24.05" fill="#4e79a7"/>
<rect x="231.99" y="427.9" width="21.4" height="24.10" fill="#4e79a7"/>
<rect x="258.70" y="428.9" width="21.4" height="23.10" fill="#4e79a7"/>
<rect x="285.42" y="428.9" width="21.4" height="23.10" fill="#4e79a7"/>
<rect x="312.13" y="428.9" width="21.4" height="23.10" fill="#4e79a7"/>
<rect x="338.84" y="429" width="21.4" height="23.00" fill="#4e79a7"/>
<rect x="365.56" y="433" width="21.4" height="19.00" fill="#4e79a7"/>
<rect x="392.27" y="432.2" width="21.4" height="19.80" fill="#4e79a7"/>
<rect x="418.98" y="432" width="21.4" height="20.00" fill="#4e79a7"/>
<rect x="445.69" y="433" width="21.4" height="19.00" fill="#4e79a7"/>
<rect x="472.41" y="433" width="21.4" height="19.00" fill="#4e79a7"/>
<rect x="499.12" y="432.15" width="21.4" height="19.85" fill="#4e79a7"/>
<rect x="525.83" y="431.3" width="21.4" height="20.70" fill="#4e79a7"/>
<rect x="552.55" y="431.3" width="21.4" height="20.70" fill="#4e79a7"/>
<rect x="579.26" y="431.3" width="21.4" height="20.70" fill="#4e79a7"/>
<rect x="605.97" y="431.3" width="21.4" height="20.70" fill="#4e79a7"/>
<rect x="632.69" y="430.4" width="21.4" height="21.60" fill="#4e79a7"/>
<rect x="659.40" y="430.4" width="21.4" height="21.60" fill="#4e79a7"/>
<rect x="686.11" y="434.7" width="21.4" height="17.30" fill="#4e79a7"/>
<rect x="712.83" y="434.7" width="21.4" height="17.30" fill="#4e79a7"/>
<rect x="739.54" y="434.7" width="21.4" height="17.30" fill="#4e79a7"/>
<rect x="766.25" y="434.7" width="21.4" height="17.30" fill="#4e79a7"/>
</svg>
</body></html>
